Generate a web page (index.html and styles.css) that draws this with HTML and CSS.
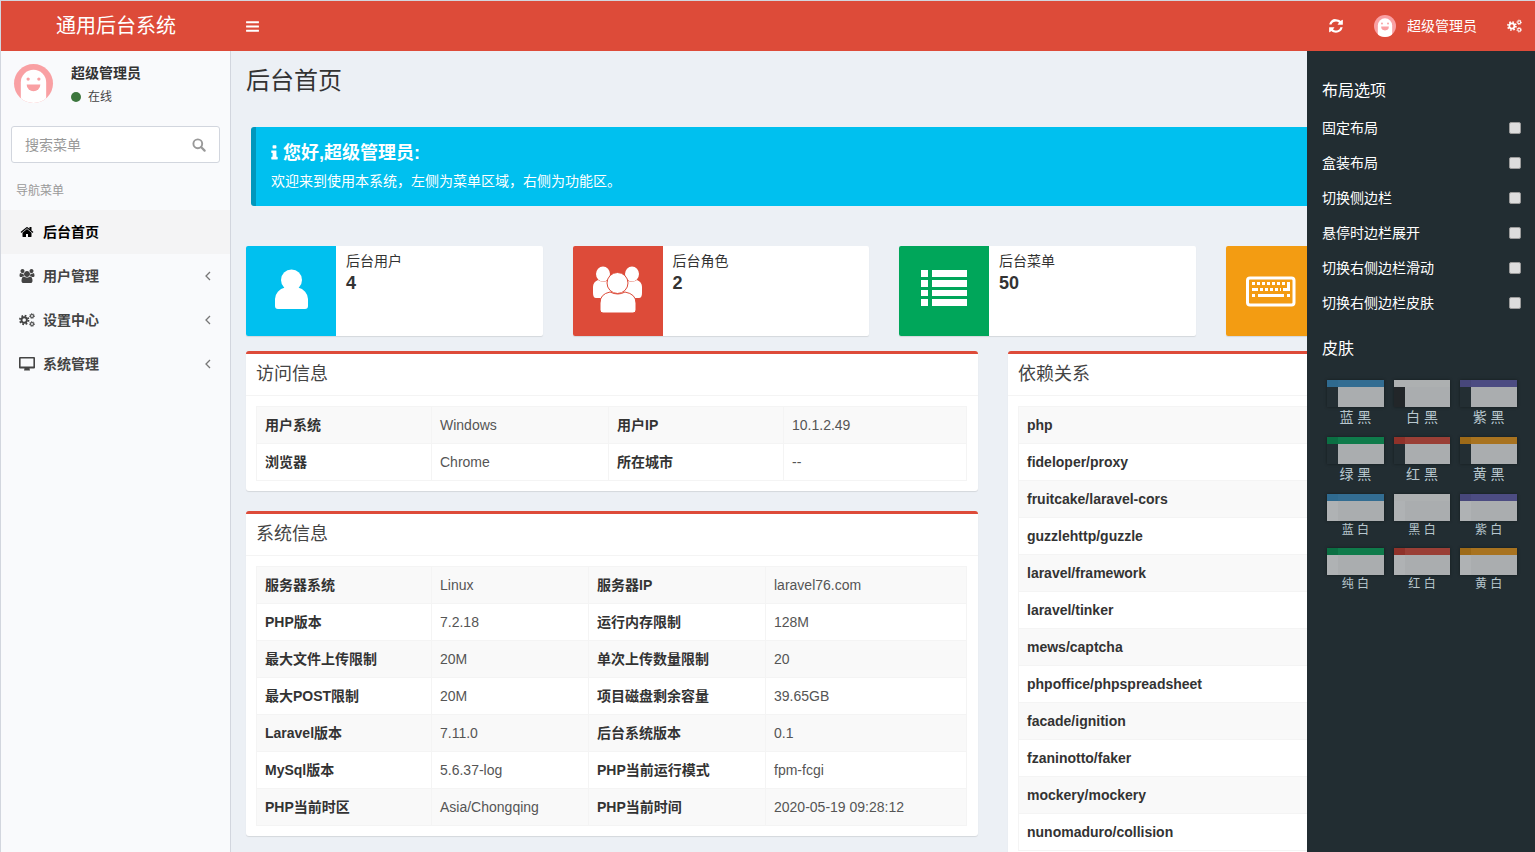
FILE: index.html
```html
<!DOCTYPE html>
<html lang="zh">
<head>
<meta charset="utf-8">
<title>通用后台系统</title>
<link rel="stylesheet" href="styles.css">
</head>
<body>
<svg class="defs" aria-hidden="true">
  <symbol id="i-cogs" viewBox="0 0 16 14">
    <g fill="none" stroke="currentColor">
      <circle cx="5.2" cy="7" r="2.7" stroke-width="1.9"/>
      <circle cx="5.2" cy="7" r="4.3" stroke-width="1.8" stroke-dasharray="1.7 1.68"/>
      <circle cx="13" cy="3" r="1.5" stroke-width="1.1"/>
      <circle cx="13" cy="3" r="2.4" stroke-width="1" stroke-dasharray="1 .88"/>
      <circle cx="13" cy="11" r="1.5" stroke-width="1.1"/>
      <circle cx="13" cy="11" r="2.4" stroke-width="1" stroke-dasharray="1 .88"/>
    </g>
  </symbol>
  <symbol id="i-ghost" viewBox="0 0 40 40">
    <path fill="#fff" d="M7 40V19a13 13 0 0 1 26 0v21z"/>
    <circle cx="14.5" cy="15.5" r="1.7" fill="#f9a0a3"/>
    <circle cx="25.5" cy="15.5" r="1.7" fill="#f9a0a3"/>
    <path fill="#f9a0a3" d="M13 21h14a7 7 0 0 1-14 0z"/>
  </symbol>
  <symbol id="i-chev" viewBox="0 0 6 10">
    <path fill="none" stroke="currentColor" stroke-width="1.3" d="M5 1 1 5l4 4"/>
  </symbol>
</svg>

<header class="topbar">
  <div class="logo">通用后台系统</div>
  <div class="topbar-main">
    <svg class="ic-bars" viewBox="0 0 1536 1792"><path fill="currentColor" d="M1536 1344v128q0 26-19 45t-45 19H64q-26 0-45-19t-19-45v-128q0-26 19-45t45-19h1408q26 0 45 19t19 45zm0-512v128q0 26-19 45t-45 19H64q-26 0-45-19T0 960V832q0-26 19-45t45-19h1408q26 0 45 19t19 45zm0-512v128q0 26-19 45t-45 19H64q-26 0-45-19T0 448V320q0-26 19-45t45-19h1408q26 0 45 19t19 45z"/></svg>
    <div class="topbar-right">
      <svg class="ic-refresh" viewBox="0 0 1536 1792"><path fill="currentColor" d="M1511 1056q0 5-1 7-64 268-268 434.500T764 1664q-146 0-282.500-55T238 1452l-129 129q-19 19-45 19t-45-19-19-45v-448q0-26 19-45t45-19h448q26 0 45 19t19 45-19 45l-137 137q71 66 161 102t187 36q134 0 250-65t186-179q11-17 53-117 8-23 30-23h192q13 0 22.500 9.500t9.500 22.500zm25-800v448q0 26-19 45t-45 19h-448q-26 0-45-19t-19-45 19-45l138-138q-148-137-349-137-134 0-250 65T332 579q-11 17-53 117-8 23-30 23H50q-13 0-22.500-9.500T18 687v-7q65-268 270-434.500T768 128q146 0 284 55.500T1297 340l130-129q19-19 45-19t45 19 19 45z"/></svg>
      <span class="top-avatar"><svg viewBox="0 0 40 40"><use href="#i-ghost"/></svg></span>
      <span class="top-name">超级管理员</span>
      <svg class="ic-topcogs"><use href="#i-cogs"/></svg>
    </div>
  </div>
</header>

<div class="shell">
  <aside class="sidebar">
    <div class="user-panel">
      <span class="avatar"><svg viewBox="0 0 40 40"><use href="#i-ghost"/></svg></span>
      <div class="user-info">
        <div class="user-name">超级管理员</div>
        <div class="user-status"><i class="dot"></i>在线</div>
      </div>
    </div>
    <div class="search">
      <span class="search-ph">搜索菜单</span>
      <svg class="ic-search" viewBox="0 0 14 14"><circle cx="5.8" cy="5.8" r="4.4" fill="none" stroke="currentColor" stroke-width="1.9"/><path stroke="currentColor" stroke-width="2.2" stroke-linecap="round" d="M9.3 9.3 12.6 12.6"/></svg>
    </div>
    <div class="nav-label">导航菜单</div>
    <nav class="menu">
      <a class="menu-item active">
        <svg class="mi" viewBox="0 0 1792 1792"><path fill="currentColor" d="M1472 992v480q0 26-19 45t-45 19h-384v-384H768v384H384q-26 0-45-19t-19-45V992q0-1 .5-3t.5-3l575-474 575 474q1 2 1 6zm223-69-62 74q-8 9-21 11h-3q-13 0-21-7L896 424l-692 577q-12 8-24 7-13-2-21-11l-62-74q-8-10-7-23.500t11-21.500l719-599q32-26 76-26t76 26l244 204V288q0-14 9-23t23-9h192q14 0 23 9t9 23v408l219 182q10 8 11 21.500t-7 23.500z"/></svg>
        <span>后台首页</span>
      </a>
      <a class="menu-item">
        <svg class="mi" viewBox="0 0 1920 1792"><path fill="currentColor" d="M593 896q-162 5-265 128H194q-82 0-138-40.500T0 865q0-353 124-353 6 0 43.500 21t97.500 42.500T384 597q67 0 133-23-5 37-5 66 0 139 81 256zm1071 637q0 120-73 189.500t-194 69.500H523q-121 0-194-69.500T256 1533q0-53 3.500-103.500t14-109 26.500-108.500 43-97.500 62-81 85.500-53.500T602 960q10 0 43 21.500t73 48 107 48 135 21.500 135-21.500 107-48 73-48 43-21.500q61 0 111.500 20t85.500 53.500 62 81 43 97.500 26.500 108.500 14 109 3.500 103.500zM640 256q0 106-75 181t-181 75-181-75-75-181 75-181T384 0t181 75 75 181zm704 384q0 159-112.500 271.500T960 1024 688.500 911.500 576 640t112.500-271.500T960 256t271.500 112.500T1344 640zm576 225q0 78-56 118.500t-138 40.500h-134q-103-123-265-128 81-117 81-256 0-29-5-66 66 23 133 23 59 0 119-21.500t97.500-42.500 43.500-21q124 0 124 353zm-128-609q0 106-75 181t-181 75-181-75-75-181 75-181 181-75 181 75 75 181z"/></svg>
        <span>用户管理</span>
        <svg class="chev"><use href="#i-chev"/></svg>
      </a>
      <a class="menu-item">
        <svg class="mi"><use href="#i-cogs"/></svg>
        <span>设置中心</span>
        <svg class="chev"><use href="#i-chev"/></svg>
      </a>
      <a class="menu-item">
        <svg class="mi" viewBox="0 0 16 14"><path fill="currentColor" d="M1 0h14a1 1 0 0 1 1 1v9.500a1 1 0 0 1-1 1H1a1 1 0 0 1-1-1V1a1 1 0 0 1 1-1zm.6 1.600v7.900h12.800V1.600zM5.500 11.500h5l.5 2H5z"/></svg>
        <span>系统管理</span>
        <svg class="chev"><use href="#i-chev"/></svg>
      </a>
    </nav>
  </aside>

  <main class="content">
    <h1 class="page-title">后台首页</h1>

    <div class="alert">
      <h4 class="alert-title"><svg class="ic-info" viewBox="0 0 640 1792"><path fill="currentColor" d="M640 1344v128q0 26-19 45t-45 19H64q-26 0-45-19t-19-45v-128q0-26 19-45t45-19h64V896H64q-26 0-45-19t-19-45V704q0-26 19-45t45-19h384q26 0 45 19t19 45v576h64q26 0 45 19t19 45zM512 192v192q0 26-19 45t-45 19H192q-26 0-45-19t-19-45V192q0-26 19-45t45-19h256q26 0 45 19t19 45z"/></svg>您好,超级管理员:</h4>
      <p class="alert-text">欢迎来到使用本系统，左侧为菜单区域，右侧为功能区。</p>
    </div>

    <section class="info-row">
      <div class="info-box">
        <div class="info-icon bg-cyan">
          <svg viewBox="0 0 90 90"><circle cx="45.500" cy="34" r="10.500" fill="#fff"/><path fill="#fff" d="M29 60V53a13 12 0 0 1 10-11.500 10 10 0 0 0 13 0A13 12 0 0 1 62 53v7a3 3 0 0 1-3 3H32a3 3 0 0 1-3-3z"/></svg>
        </div>
        <div class="info-text"><span class="info-label">后台用户</span><b class="info-num">4</b></div>
      </div>
      <div class="info-box">
        <div class="info-icon bg-red">
          <svg viewBox="0 0 90 90">
            <ellipse cx="30" cy="28" rx="7" ry="7.500" fill="#fff"/>
            <ellipse cx="59" cy="28" rx="7" ry="7.500" fill="#fff"/>
            <path fill="#fff" d="M20 47v-6q0-5 5-7 4 3 9 1l8 13-6 4h-13q-3 0-3-5zM69 47v-6q0-5-5-7-4 3-9 1l-8 13 6 4h13q3 0 3-5z"/>
            <path fill="#fff" stroke="#dd4b39" d="M27 64V57q0-9 10-11 8 4 15 0 11 2 11 11v7q0 3-3 3H30q-3 0-3-3z"/>
            <ellipse cx="44.500" cy="37" rx="10.500" ry="10.500" fill="#fff" stroke="#dd4b39"/>
          </svg>
        </div>
        <div class="info-text"><span class="info-label">后台角色</span><b class="info-num">2</b></div>
      </div>
      <div class="info-box">
        <div class="info-icon bg-green">
          <svg viewBox="0 0 90 90"><path fill="#fff" d="M22 24h7v7h-7zM33 24h35v7H33zM22 34h7v7h-7zM33 34h35v7H33zM22 44h7v6h-7zM33 44h35v6H33zM22 53h7v7h-7zM33 53h35v7H33z"/></svg>
        </div>
        <div class="info-text"><span class="info-label">后台菜单</span><b class="info-num">50</b></div>
      </div>
      <div class="info-box">
        <div class="info-icon bg-orange">
          <svg viewBox="0 0 90 90">
            <rect x="21.500" y="32" width="46.500" height="27" rx="2.500" fill="none" stroke="#fff" stroke-width="3"/>
            <path fill="#fff" d="M26 36h3v3h-3zM31 36h3v3h-3zM36 36h3v3h-3zM41 36h3v3h-3zM46 36h3v3h-3zM51 36h3v3h-3zM56 36h3v3h-3zM61 36h3v9h-7v-3h4zM26 42h6v3h-6zM34 42h3v3h-3zM39 42h3v3h-3zM44 42h3v3h-3zM49 42h3v3h-3zM54 42h1v3h-1zM26 48h3v3h-3zM32 48h26v3H32zM61 48h3v3h-3z"/>
          </svg>
        </div>
        <div class="info-text"><span class="info-label"></span></div>
      </div>
    </section>

    <section class="main-row">
      <div class="col">
        <div class="box">
          <h3 class="box-title">访问信息</h3>
          <div class="box-body">
            <table class="tbl tbl-a">
              <colgroup><col class="c1"><col class="c2"><col class="c3"><col class="c4"></colgroup>
              <tr><th>用户系统</th><td>Windows</td><th>用户IP</th><td>10.1.2.49</td></tr>
              <tr><th>浏览器</th><td>Chrome</td><th>所在城市</th><td>--</td></tr>
            </table>
          </div>
        </div>
        <div class="box">
          <h3 class="box-title">系统信息</h3>
          <div class="box-body">
            <table class="tbl tbl-b">
              <colgroup><col class="c1"><col class="c2"><col class="c3"><col class="c4"></colgroup>
              <tr><th>服务器系统</th><td>Linux</td><th>服务器IP</th><td>laravel76.com</td></tr>
              <tr><th>PHP版本</th><td>7.2.18</td><th>运行内存限制</th><td>128M</td></tr>
              <tr><th>最大文件上传限制</th><td>20M</td><th>单次上传数量限制</th><td>20</td></tr>
              <tr><th>最大POST限制</th><td>20M</td><th>项目磁盘剩余容量</th><td>39.65GB</td></tr>
              <tr><th>Laravel版本</th><td>7.11.0</td><th>后台系统版本</th><td>0.1</td></tr>
              <tr><th>MySql版本</th><td>5.6.37-log</td><th>PHP当前运行模式</th><td>fpm-fcgi</td></tr>
              <tr><th>PHP当前时区</th><td>Asia/Chongqing</td><th>PHP当前时间</th><td>2020-05-19 09:28:12</td></tr>
            </table>
          </div>
        </div>
      </div>
      <div class="col">
        <div class="box">
          <h3 class="box-title">依赖关系</h3>
          <div class="box-body">
            <table class="tbl tbl-dep">
              <tr><th>php</th></tr>
              <tr><th>fideloper/proxy</th></tr>
              <tr><th>fruitcake/laravel-cors</th></tr>
              <tr><th>guzzlehttp/guzzle</th></tr>
              <tr><th>laravel/framework</th></tr>
              <tr><th>laravel/tinker</th></tr>
              <tr><th>mews/captcha</th></tr>
              <tr><th>phpoffice/phpspreadsheet</th></tr>
              <tr><th>facade/ignition</th></tr>
              <tr><th>fzaninotto/faker</th></tr>
              <tr><th>mockery/mockery</th></tr>
              <tr><th>nunomaduro/collision</th></tr>
            </table>
          </div>
        </div>
      </div>
    </section>
  </main>

  <aside class="panel">
    <h4 class="panel-h first">布局选项</h4>
    <ul class="opts">
      <li>固定布局<i class="chk"></i></li>
      <li>盒装布局<i class="chk"></i></li>
      <li>切换侧边栏<i class="chk"></i></li>
      <li>悬停时边栏展开<i class="chk"></i></li>
      <li>切换右侧边栏滑动<i class="chk"></i></li>
      <li>切换右侧边栏皮肤<i class="chk"></i></li>
    </ul>
    <h4 class="panel-h">皮肤</h4>
    <div class="skins">
      <div class="skin s-blue dark"><div class="sw"><i class="bar"><b></b></i><i class="body"><b></b></i></div><p>蓝 黑</p></div>
      <div class="skin s-grey dark"><div class="sw"><i class="bar"><b></b></i><i class="body"><b></b></i></div><p>白 黑</p></div>
      <div class="skin s-purple dark"><div class="sw"><i class="bar"><b></b></i><i class="body"><b></b></i></div><p>紫 黑</p></div>
      <div class="skin s-green dark"><div class="sw"><i class="bar"><b></b></i><i class="body"><b></b></i></div><p>绿 黑</p></div>
      <div class="skin s-red dark"><div class="sw"><i class="bar"><b></b></i><i class="body"><b></b></i></div><p>红 黑</p></div>
      <div class="skin s-yellow dark"><div class="sw"><i class="bar"><b></b></i><i class="body"><b></b></i></div><p>黄 黑</p></div>
      <div class="skin s-blue light"><div class="sw"><i class="bar"><b></b></i><i class="body"><b></b></i></div><p>蓝 白</p></div>
      <div class="skin s-grey light"><div class="sw"><i class="bar"><b></b></i><i class="body"><b></b></i></div><p>黑 白</p></div>
      <div class="skin s-purple light"><div class="sw"><i class="bar"><b></b></i><i class="body"><b></b></i></div><p>紫 白</p></div>
      <div class="skin s-green light"><div class="sw"><i class="bar"><b></b></i><i class="body"><b></b></i></div><p>纯 白</p></div>
      <div class="skin s-red light"><div class="sw"><i class="bar"><b></b></i><i class="body"><b></b></i></div><p>红 白</p></div>
      <div class="skin s-yellow light"><div class="sw"><i class="bar"><b></b></i><i class="body"><b></b></i></div><p>黄 白</p></div>
    </div>
  </aside>
</div>
</body>
</html>
```
FILE: styles.css
```css
* { box-sizing: border-box; }
html, body { margin: 0; height: 100%; }
body {
  height: 852px;
  overflow: hidden;
  border-top: 1px solid #d2d6de;
  border-left: 1px solid #d2d6de;
  background: #ecf0f5;
  color: #333;
  font: 14px/20px "Liberation Sans", "Noto Sans CJK SC", sans-serif;
  display: flex;
  flex-direction: column;
}
.defs { display: none; }
h1, h3, h4, p, ul { margin: 0; padding: 0; }
li { list-style: none; }
i { font-style: normal; }

/* top bar */
.topbar { flex: 0 0 50px; height: 50px; display: flex; background: #dd4b39; color: #fff; }
.logo { flex: 0 0 230px; height: 50px; padding-left: 55px; font-size: 20px; line-height: 50px; }
.topbar-main { flex: 1; display: flex; align-items: center; justify-content: space-between; padding: 0 13px 0 15px; }
.ic-bars { width: 13px; height: 15px; }
.topbar-right { display: flex; align-items: center; }
.ic-refresh { width: 14px; height: 16px; margin-right: 31px; }
.top-avatar { width: 22px; height: 22px; border-radius: 50%; background: #f9a0a3; overflow: hidden; display: flex; margin-right: 11px; }
.top-avatar svg { width: 22px; height: 22px; }
.top-name { font-size: 14px; margin-right: 30px; }
.ic-topcogs { width: 15px; height: 14px; }

/* shell */
.shell { flex: 1; display: flex; min-height: 0; position: relative; }

/* sidebar */
.sidebar { flex: 0 0 230px; background: #f9fafc; border-right: 1px solid #d2d6de; color: #444; }
.user-panel { display: flex; padding: 13px 13px 0; height: 75px; }
.avatar { width: 39px; height: 39px; border-radius: 50%; background: #f9a0a3; overflow: hidden; flex: none; margin-right: 18px; }
.avatar svg { width: 39px; height: 39px; display: block; }
.user-name { font-weight: 700; line-height: 18px; color: #333; }
.user-status { display: flex; align-items: center; font-size: 12px; line-height: 18px; margin-top: 6px; color: #444; }
.dot { width: 10px; height: 10px; border-radius: 50%; background: #3c763d; margin-right: 7px; }
.search { margin: 0 10px; height: 37px; border: 1px solid #d2d6de; border-radius: 3px; background: #fff; display: flex; align-items: center; justify-content: space-between; padding: 0 13px; }
.search-ph { color: #999; font-size: 14px; }
.ic-search { width: 14px; height: 14px; color: #999; }
.nav-label { padding: 18px 15px 0; height: 47px; font-size: 12px; line-height: 20px; color: #999; }
.menu-item { height: 44px; display: flex; align-items: center; padding-left: 18px; font-weight: 700; color: #444; position: relative; }
.menu-item.active { background: #f4f4f5; color: #000; }
.mi { width: 16px; height: 14px; margin-right: 8px; }
.chev { width: 6px; height: 10px; position: absolute; right: 19px; top: 17px; color: #777; }

/* content */
.content { flex: 1; min-width: 0; padding: 0 15px; overflow: hidden; }
.page-title { font-size: 24px; font-weight: 400; line-height: 30px; padding-top: 15px; height: 76px; color: #333; }
.alert { margin: 0 5px 40px; height: 79px; border-left: 5px solid #0097bc; border-radius: 3px; background: #00c0ef; color: #fff; padding: 16px 15px 0; }
.alert-title { font-size: 18px; font-weight: 700; line-height: 20px; display: flex; align-items: center; }
.ic-info { width: 7px; height: 18px; margin-right: 5px; }
.alert-text { margin-top: 8px; font-size: 14px; line-height: 20px; }

.info-row { display: grid; grid-template-columns: repeat(4, 296.5px); gap: 30px; margin-bottom: 15px; }
.info-box { height: 90px; display: flex; background: #fff; border-radius: 2px; box-shadow: 0 1px 1px rgba(0,0,0,.1); }
.info-icon { flex: 0 0 90px; border-radius: 2px 0 0 2px; }
.info-icon svg { display: block; width: 90px; height: 90px; }
.bg-cyan { background: #00c0ef; }
.bg-red { background: #dd4b39; }
.bg-green { background: #00a65a; }
.bg-orange { background: #f39c12; }
.info-text { padding: 5px 10px; display: flex; flex-direction: column; }
.info-label { font-size: 14px; line-height: 20px; }
.info-num { font-size: 18px; line-height: 25px; font-weight: 700; }

.main-row { display: grid; grid-template-columns: 732px 514px; gap: 30px; }
.box { background: #fff; border-top: 3px solid #dd4b39; border-radius: 3px; box-shadow: 0 1px 1px rgba(0,0,0,.1); margin-bottom: 20px; }
.box-title { font-size: 18px; font-weight: 400; line-height: 20px; height: 42px; padding: 10px; border-bottom: 1px solid #f4f4f4; color: #444; }
.box-body { padding: 10px; }
.tbl { width: 100%; border-collapse: collapse; table-layout: fixed; font-size: 14px; }
.tbl-a, .tbl-b { width: 711px; }
.tbl th, .tbl td { border: 1px solid #f4f4f4; padding: 8px; height: 37px; line-height: 20px; text-align: left; white-space: nowrap; }
.tbl th { font-weight: 700; color: #333; }
.tbl td { color: #555; }
.tbl tr:nth-child(odd) { background: #f9f9f9; }
.tbl-a .c1 { width: 175px; } .tbl-a .c2 { width: 177px; } .tbl-a .c3 { width: 175px; }
.tbl-b .c1 { width: 175px; } .tbl-b .c2 { width: 157px; } .tbl-b .c3 { width: 177px; }

/* right panel */
.panel { position: absolute; top: 0; right: 0; bottom: 0; width: 228px; background: #222d32; color: #fff; padding: 0 15px; }
.panel-h { font-size: 16px; font-weight: 400; line-height: 20px; padding: 30px 0 0; height: 59px; }
.opts li { height: 35px; line-height: 20px; display: flex; justify-content: space-between; align-items: center; font-size: 14px; margin-right: -1px; }
.chk { width: 12px; height: 12px; background: #ddd; border: 1px solid #9a9a9a; border-radius: 2px; }
.panel .opts { margin-bottom: -1px; }
.panel .opts + .panel-h { padding-top: 20px; height: 61px; }
.skins { display: grid; grid-template-columns: repeat(3, 66.66px); }
.skin { padding: 0 5px; }
.skin p { text-align: center; color: #b8c7ce; font-size: 14px; line-height: 20px; height: 30px; }
.skin.light p { font-size: 12px; line-height: 18px; height: 27px; }
.sw { box-shadow: 0 0 3px rgba(0,0,0,.4); height: 27px; }
.sw .bar, .sw .body { display: block; }
.sw .bar { height: 7px; }
.sw .body { height: 20px; background: #aaadaf; }
.sw b { display: block; width: 11px; height: 100%; }
.dark .sw .body b { background: #232e33; }
.light .sw .body b { background: #afb2b4; }
.s-blue .bar { background: #336d92; } .s-blue .bar b { background: #2f6a8f; }
.s-grey .bar { background: #adb0b1; } .s-grey .bar b { background: #adb0b1; }
.s-grey.dark .body b { background: #222629; }
.s-purple .bar { background: #4c4c82; } .s-purple .bar b { background: #47477a; }
.s-green .bar { background: #0f7b4b; } .s-green .bar b { background: #0b6f43; }
.s-red .bar { background: #9a3f36; } .s-red .bar b { background: #8f322a; }
.s-yellow .bar { background: #a87320; } .s-yellow .bar b { background: #9d6a18; }
```
